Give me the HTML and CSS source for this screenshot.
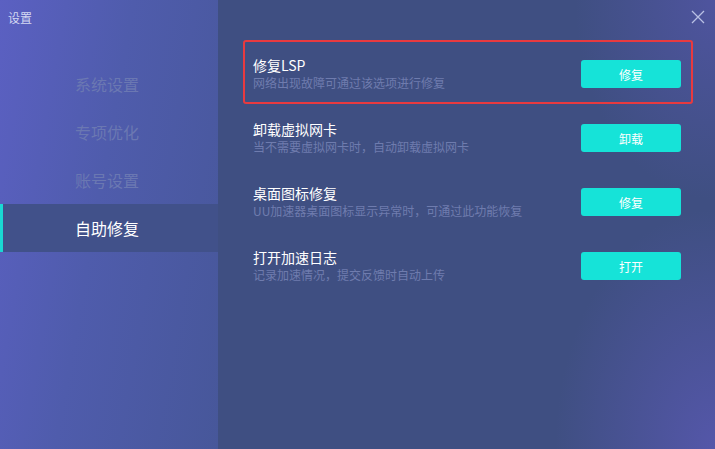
FILE: index.html
```html
<!DOCTYPE html>
<html lang="zh-CN">
<head>
  <meta charset="UTF-8">
  <title>设置</title>
  <link rel="stylesheet" href="styles.css">
</head>
<body>

<div class="settings-window">
  <div class="sidebar">
    <div class="window-title">设置</div>
    <ul class="nav">
      <li class="nav-item">系统设置</li>
      <li class="nav-item">专项优化</li>
      <li class="nav-item">账号设置</li>
      <li class="nav-item active">自助修复</li>
    </ul>
  </div>

  <div class="main">
    <button class="close-btn" aria-label="关闭">
      <svg width="14" height="14" viewBox="0 0 14 14">
        <path d="M1 1 L13 13 M13 1 L1 13" stroke="#b9c0e4" stroke-width="1.3" fill="none"/>
      </svg>
    </button>

    <div class="repair-list">
      <div class="repair-row highlight">
        <div class="repair-text">
          <div class="repair-title">修复LSP</div>
          <div class="repair-desc">网络出现故障可通过该选项进行修复</div>
        </div>
        <button class="repair-btn">修复</button>
      </div>

      <div class="repair-row">
        <div class="repair-text">
          <div class="repair-title">卸载虚拟网卡</div>
          <div class="repair-desc">当不需要虚拟网卡时，自动卸载虚拟网卡</div>
        </div>
        <button class="repair-btn">卸载</button>
      </div>

      <div class="repair-row">
        <div class="repair-text">
          <div class="repair-title">桌面图标修复</div>
          <div class="repair-desc">UU加速器桌面图标显示异常时，可通过此功能恢复</div>
        </div>
        <button class="repair-btn">修复</button>
      </div>

      <div class="repair-row">
        <div class="repair-text">
          <div class="repair-title">打开加速日志</div>
          <div class="repair-desc">记录加速情况，提交反馈时自动上传</div>
        </div>
        <button class="repair-btn">打开</button>
      </div>
    </div>
  </div>
</div>

</body>
</html>
```

FILE: styles.css
```css
html, body {
  margin: 0;
  padding: 0;
}

body {
  font-family: "Noto Sans CJK SC", "Noto Sans", sans-serif;
  background-color: #3f4f82;
}

.settings-window {
  display: flex;
  width: 715px;
  height: 449px;
  overflow: hidden;
}

.sidebar {
  width: 218px;
  flex-shrink: 0;
  background: linear-gradient(100deg, #5b60c2 0%, #4f5cac 45%, #47579a 100%);
}

.window-title {
  padding: 9px 0 0 8px;
  height: 60px;
  box-sizing: border-box;
  font-size: 12px;
  line-height: 18px;
  color: #d4d8f2;
}

.nav {
  list-style: none;
  margin: 0;
  padding: 0;
}

.nav-item {
  height: 48px;
  line-height: 48px;
  text-align: center;
  font-size: 16px;
  color: #6b78b2;
  padding-right: 4px;
  box-sizing: border-box;
}

.nav-item.active {
  color: #fff;
  background-color: #41518a;
  border-left: 3px solid #1ad8d4;
  padding-right: 7px;
}

.main {
  flex: 1;
  position: relative;
  background:
    radial-gradient(ellipse 140px 200px at 100% 0%, rgba(84, 86, 168, 0.75), rgba(84, 86, 168, 0)),
    radial-gradient(ellipse 160px 240px at 100% 100%, rgba(88, 88, 176, 0.85), rgba(88, 88, 176, 0)),
    #3f4f82;
}

.close-btn {
  position: absolute;
  top: 10px;
  right: 10px;
  padding: 0;
  border: none;
  background: none;
  width: 14px;
  height: 14px;
  cursor: pointer;
}

.close-btn svg {
  display: block;
}

.repair-list {
  padding: 40px 22px 0 25px;
}

.repair-row {
  display: flex;
  align-items: center;
  justify-content: space-between;
  height: 64px;
  padding: 4px 10px 0 8px;
  border: 2px solid transparent;
  border-radius: 3px;
  box-sizing: border-box;
}

.repair-row.highlight {
  border-color: #e83a3f;
}

.repair-title {
  font-size: 14px;
  line-height: 18px;
  color: #fff;
}

.repair-desc {
  font-size: 12px;
  line-height: 18px;
  color: #6f7cae;
}

.repair-btn {
  width: 100px;
  height: 28px;
  border: none;
  border-radius: 3px;
  background-color: #16e3d8;
  color: #fff;
  font-family: inherit;
  font-size: 12px;
  cursor: pointer;
}
```
